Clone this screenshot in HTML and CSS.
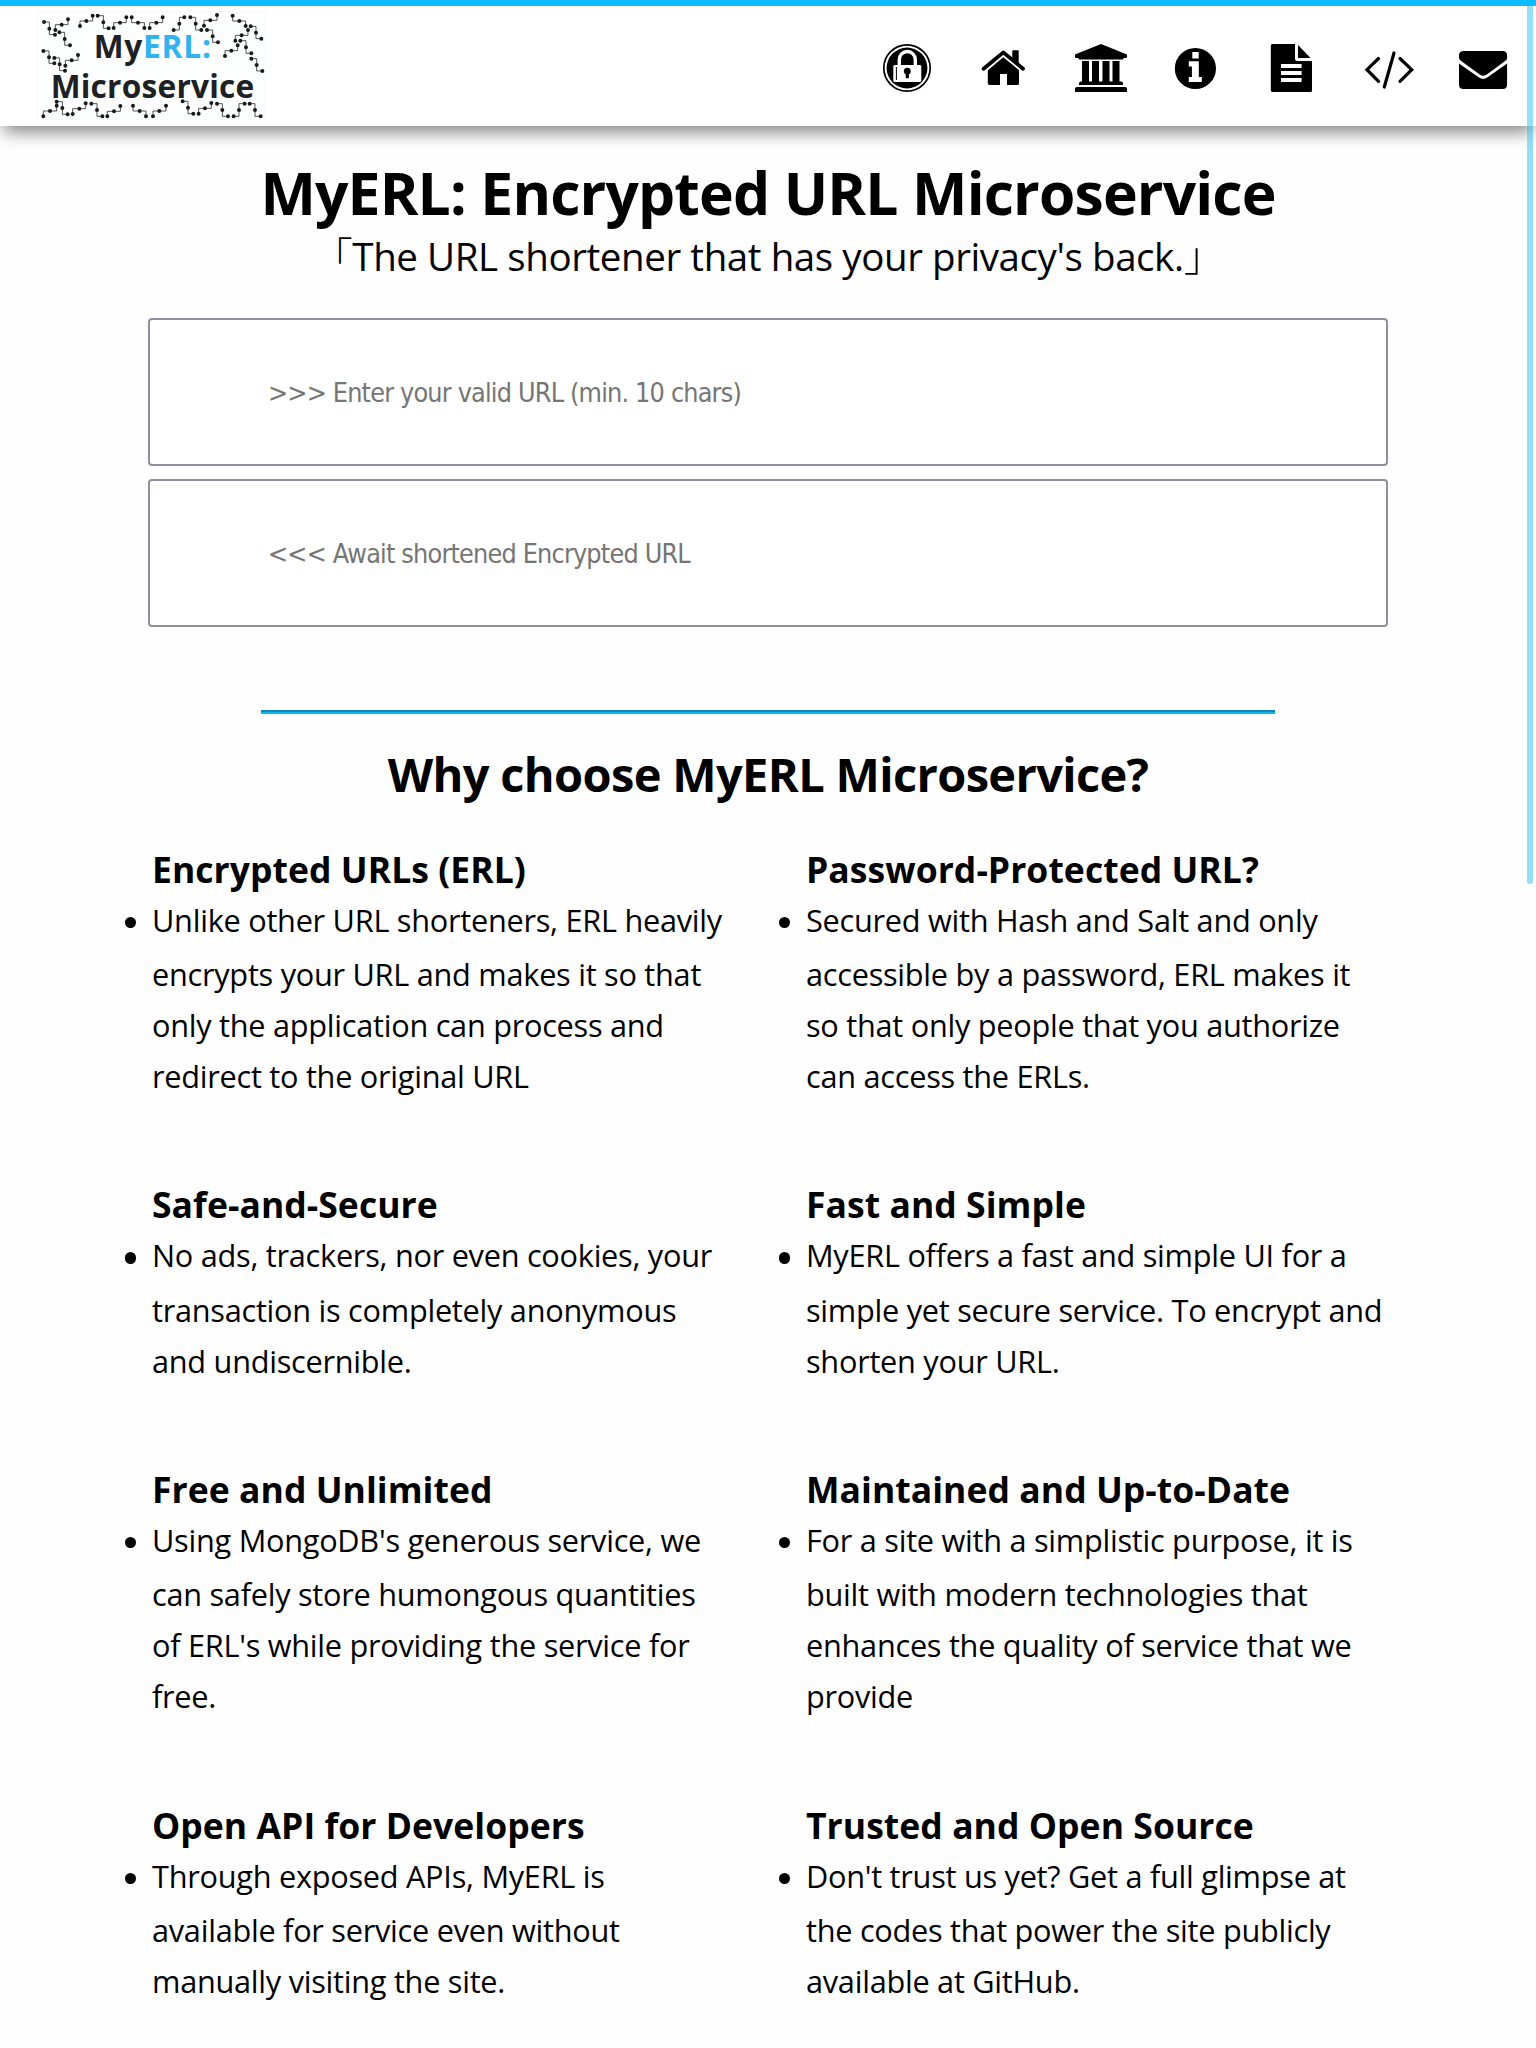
FILE: index.html
```html
<!DOCTYPE html>
<html lang="en">
<head>
<meta charset="utf-8">
<title>MyERL: Encrypted URL Microservice</title>
<link rel="stylesheet" href="styles.css">
</head>
<body>
<div class="scroll-thumb"></div>
<header class="header">
  <svg class="logo" viewBox="110 33 687 328" role="img" aria-label="MyERL: Microservice">
    <rect class="logo-card" x="111" y="34" width="685" height="326"/>
    <path class="wires" d="M131 66H147V104H164M177 97H193V136H209M165 90V74H203V58M239 78V63H277V47M292 47H309V85H325M340 84V68H378V52M394 52V68H432V84M448 84V68H487V52M520 90H537V52H552M570 52H586V90H603M611 77V61H650V45M620 90H637V127H653M697 47V63H736V78M751 79H767V116H783M705 122V106H743V90M720 122H737V160H753M674 168V152H712V136M753 176H769V213H786M129 153H146V190H162M162 174H178V212H194M195 197V181H233V165M129 349V333H169V317M169 305H186V343H202M217 342V326H256V310M273 311H290V349H306M321 349V334H360V318M398 317V333H437V349M458 349V333H497V317M547 304H563V341H579M595 341V325H633V309M650 311H666V349H683M700 349H716V311H733M748 311H764V349H781"/>
    <path class="nodes" d="M131 66h0M147 86h0M164 104h0M177 97h0M193 117h0M209 136h0M165 90h0M184 74h0M203 58h0M239 78h0M258 63h0M277 47h0M292 47h0M309 67h0M325 85h0M340 84h0M359 68h0M378 52h0M394 52h0M413 68h0M432 84h0M448 84h0M468 68h0M487 52h0M520 90h0M537 71h0M552 52h0M570 52h0M586 71h0M603 90h0M611 77h0M630 61h0M650 45h0M620 90h0M637 109h0M653 127h0M697 47h0M717 63h0M736 78h0M751 79h0M767 98h0M783 116h0M705 122h0M724 106h0M743 90h0M720 122h0M737 142h0M753 160h0M674 168h0M693 152h0M712 136h0M753 176h0M769 195h0M786 213h0M129 153h0M146 172h0M162 190h0M162 174h0M178 193h0M194 212h0M195 197h0M214 181h0M233 165h0M129 349h0M149 333h0M169 317h0M169 305h0M186 324h0M202 343h0M217 342h0M237 326h0M256 310h0M273 311h0M290 330h0M306 349h0M321 349h0M341 334h0M360 318h0M398 317h0M418 333h0M437 349h0M458 349h0M477 333h0M497 317h0M547 304h0M563 323h0M579 341h0M595 341h0M614 325h0M633 309h0M650 311h0M666 330h0M683 349h0M700 349h0M716 330h0M733 311h0M748 311h0M764 330h0M781 349h0"/>
    <text class="logo-text" x="280" y="173" textLength="352">My<tspan class="logo-blue">ERL:</tspan></text>
    <text class="logo-text" x="151" y="293" textLength="611">Microservice</text>
  </svg>
  <nav class="nav">
    <svg class="icon" viewBox="859 40 96 56">
      <circle cx="907" cy="68" r="23.2" fill="#fff" stroke="#000" stroke-width="1.7"/>
      <circle cx="907" cy="68" r="20.4"/>
      <path d="M899.3 65v-5.5a8 8 0 0 1 16 0V65" fill="none" stroke="#fff" stroke-width="3.4"/>
      <rect x="893.3" y="65" width="28" height="17" rx="1.5" fill="#fff"/>
      <path d="M896.4 67v13" stroke="#000" stroke-width="1"/>
      <circle cx="907.3" cy="71.2" r="3.4"/><path d="M905.7 72h3.2v6.2h-3.2z"/>
    </svg>
    <svg class="icon" viewBox="955 40 96 56">
      <path d="M983.6 68.7L1003.3 52.4L1023 68.7" fill="none" stroke="#000" stroke-width="3.8" stroke-linecap="round" stroke-linejoin="round"/>
      <path d="M1012.3 51.3q0-1 1-1h4.4q1 0 1 1V66l-6.4-5.4z"/>
      <path d="M1003.3 57.2L1019 70.2V83.5q0 1.6-1.6 1.6H1007V74H1000v11.1h-10.4q-1.8 0-1.8-1.8V70.2z"/>
    </svg>
    <svg class="icon" viewBox="1051 40 96 56">
      <path d="M1101 44L1127 54.5V57q0 1-1 1h-2.5v.5q0 1-1 1h-43q-1 0-1-1V58h-2.5q-1 0-1-1v-2.5z"/>
      <path d="M1082 61h7v20.5h3V61h7v20.5h3.5V61h7v20.5h3V61h7v20.5h1.5q2 0 2 2V85h-44v-1.5q0-2 2-2h1z"/>
      <path d="M1077 87h48q2 0 2 2v3h-52v-3q0-2 2-2z"/>
    </svg>
    <svg class="icon" viewBox="1147 40 96 56">
      <circle cx="1195.4" cy="68.5" r="20.6"/>
      <path fill="#fff" d="M1192.3 52h6.4v6.4h-6.4zM1188.8 61.3h10v15.7h3v5h-13v-5h3.1v-10.5h-3.1z"/>
    </svg>
    <svg class="icon" viewBox="1243 40 96 56">
      <path d="M1272.7 44H1295v15q0 2 2 2h15v29.5q0 1.5-1.5 1.5h-38q-1.7 0-1.7-1.7v-44.6q0-1.7 1.7-1.7z"/>
      <path d="M1298 45l12.6 12.9H1298z"/>
      <path d="M1281 66h20.6M1281 73h20.6M1281 80h20.6" stroke="#fff" stroke-width="4"/>
    </svg>
    <svg class="icon" viewBox="1339 40 96 56">
      <path d="M1378.5 58.5L1367 69.7L1378.5 81.3M1400 58.5L1411.7 69.7L1400 81.3M1394 53L1384.3 87" fill="none" stroke="#000" stroke-width="3.2" stroke-linecap="round" stroke-linejoin="miter"/>
    </svg>
    <svg class="icon" viewBox="1435 40 96 56">
      <path d="M1463.5 51h39q4.6 0 4.6 4.6v1.8q0 2.2-2 3.7l-18.6 13.6q-3.2 2.2-6.4 0l-18.9-13.6q-2.2-1.6-2.2-3.7v-1.8q0-4.6 4.5-4.6z"/>
      <path d="M1459 63.5l20 14.1q4.2 2.6 8.2 0l19.9-14.1v21q0 4.5-4.6 4.5h-39q-4.5 0-4.5-4.5z"/>
    </svg>
  </nav>
</header>
<main class="main">
  <h1 class="title">MyERL: Encrypted URL Microservice</h1>
  <p class="tagline"><span class="quote">「</span>The URL shortener that has your privacy's back.<span class="quote">」</span></p>
  <form class="form">
    <input class="field" type="text" placeholder="&gt;&gt;&gt; Enter your valid URL (min. 10 chars)">
    <input class="field" type="text" placeholder="&lt;&lt;&lt; Await shortened Encrypted URL" readonly>
  </form>
  <hr class="rule">
  <h2 class="subtitle">Why choose MyERL Microservice?</h2>
  <div class="features">
    <section>
      <h3 class="name">Encrypted URLs (ERL)</h3>
      <ul class="list"><li>Unlike other URL shorteners, ERL heavily<br>encrypts your URL and makes it so that<br>only the application can process and<br>redirect to the original URL</li></ul>
    </section>
    <section>
      <h3 class="name">Password-Protected URL?</h3>
      <ul class="list"><li>Secured with Hash and Salt and only<br>accessible by a password, ERL makes it<br>so that only people that you authorize<br>can access the ERLs.</li></ul>
    </section>
    <section>
      <h3 class="name">Safe-and-Secure</h3>
      <ul class="list"><li>No ads, trackers, nor even cookies, your<br>transaction is completely anonymous<br>and undiscernible.</li></ul>
    </section>
    <section>
      <h3 class="name">Fast and Simple</h3>
      <ul class="list"><li>MyERL offers a fast and simple UI for a<br>simple yet secure service. To encrypt and<br>shorten your URL.</li></ul>
    </section>
    <section>
      <h3 class="name">Free and Unlimited</h3>
      <ul class="list"><li>Using MongoDB's generous service, we<br>can safely store humongous quantities<br>of ERL's while providing the service for<br>free.</li></ul>
    </section>
    <section>
      <h3 class="name">Maintained and Up-to-Date</h3>
      <ul class="list"><li>For a site with a simplistic purpose, it is<br>built with modern technologies that<br>enhances the quality of service that we<br>provide</li></ul>
    </section>
    <section>
      <h3 class="name">Open API for Developers</h3>
      <ul class="list"><li>Through exposed APIs, MyERL is<br>available for service even without<br>manually visiting the site.</li></ul>
    </section>
    <section>
      <h3 class="name">Trusted and Open Source</h3>
      <ul class="list"><li>Don't trust us yet? Get a full glimpse at<br>the codes that power the site publicly<br>available at GitHub.</li></ul>
    </section>
  </div>
</main>
</body>
</html>
```
FILE: styles.css
```css
* { box-sizing: border-box; }
html { overflow: hidden; }
body {
  margin: 0;
  height: 2048px;
  overflow: hidden;
  background: #fefefe;
  color: #000;
  font-family: "Open Sans", "Noto Sans", sans-serif;
}
.scroll-thumb {
  position: absolute;
  z-index: 2;
  top: 6px;
  left: 1527px;
  width: 6px;
  height: 878px;
  border-radius: 0 0 3px 3px;
  background: rgba(20, 180, 235, .44);
}
.header {
  position: relative;
  display: flex;
  justify-content: space-between;
  height: 126px;
  padding: 5px 5px 0 37px;
  border-top: 6px solid #0fbbff;
  background: #fff;
  box-shadow: 0 10px 16px -4px #848484;
}
.logo { width: 229px; height: 109.333px; }
.logo-card { fill: #fdfefe; stroke: #f4f4f4; stroke-width: 2; }
.wires { fill: none; stroke: #333; stroke-width: 2.5; }
.nodes { fill: none; stroke: #181a1b; stroke-width: 12; stroke-linecap: round; }
.logo-text { font-size: 95px; font-weight: 700; fill: #1e2124; }
.logo-blue { fill: #30b3f0; }
.nav { display: flex; padding-top: 29px; }
.icon { width: 96px; height: 56px; }
.main { display: flex; flex-direction: column; align-items: center; padding-top: 27px; }
.title {
  margin: 0;
  font-size: 58.8px;
  line-height: 78px;
  letter-spacing: -.85px;
  white-space: nowrap;
}
.tagline {
  margin: -1px 0 0;
  height: 52px;
  font-size: 38.5px;
  line-height: 52px;
  letter-spacing: -.42px;
  white-space: nowrap;
}
/* Half-width forms of the corner brackets. */
.quote {
  font-family: "Noto Sans CJK JP", sans-serif;
  font-feature-settings: "halt";
  font-size: 40px;
  font-weight: 300;
  line-height: 0;
}
.form { display: flex; flex-direction: column; gap: 13px; width: 1240px; margin-top: 36px; }
.field {
  height: 148px;
  padding: 0 118px;
  border: 2px solid #8f8f9d;
  border-radius: 4px;
  background: #fff;
  font-family: "DejaVu Sans Condensed", "DejaVu Sans", sans-serif;
  font-stretch: condensed;
  font-size: 26.7px;
  letter-spacing: -.8px;
}
.field::placeholder { color: #757575; opacity: 1; }
.rule {
  width: 1014px;
  height: 4px;
  margin: 83px 0 0;
  border: 0;
  border-top: 2px solid #0d87b5;
  background: #12b5ec;
}
.subtitle {
  margin: 27.5px 0 39.3px;
  font-size: 47px;
  line-height: 64px;
  letter-spacing: -.65px;
  white-space: nowrap;
}
.features {
  display: grid;
  grid-template-columns: 600px 600px;
  column-gap: 54px;
  row-gap: 78.2px;
  width: 1254px;
  margin-left: 22px;
}
.name {
  margin: 0 0 2px;
  font-size: 35.5px;
  line-height: 48px;
  letter-spacing: .05px;
  white-space: nowrap;
}
.list {
  margin: 0;
  padding: 0;
  list-style: none;
  font-size: 30.7px;
  line-height: 51px;
  letter-spacing: -.26px;
  white-space: nowrap;
}
.list li { position: relative; }
/* Bullet hanging in the left gutter of the item. */
.list li::after {
  content: "";
  position: absolute;
  left: -27.5px;
  top: 22px;
  width: 11.5px;
  height: 11.5px;
  border-radius: 50%;
  background: #000;
}
/* Strut that gives the first line a little more depth. */
.list li::before {
  content: "";
  display: inline-block;
  width: 0;
  height: 17.4px;
  vertical-align: -17.4px;
}
```
